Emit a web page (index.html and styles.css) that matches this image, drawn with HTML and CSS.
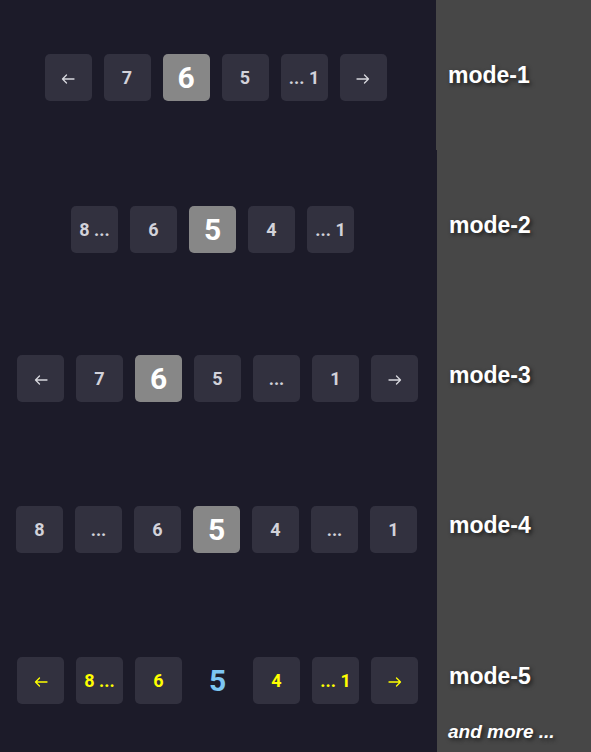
FILE: index.html
```html
<!DOCTYPE html>
<html>
<head>
<meta charset="utf-8">
<link rel="stylesheet" href="styles.css">
</head>
<body>
<main class="demo">
  <section class="row row-1">
    <div class="pager-area">
      <nav class="pager">
        <span class="btn"><svg class="arrow" viewBox="0 0 14 10" width="14" height="10"><path d="M13 5H1.5M5.5 1 1.5 5l4 4"/></svg></span>
        <span class="btn">7</span>
        <span class="btn active">6</span>
        <span class="btn">5</span>
        <span class="btn">... 1</span>
        <span class="btn"><svg class="arrow" viewBox="0 0 14 10" width="14" height="10"><path d="M1 5h11.5M8.5 1l4 4-4 4"/></svg></span>
      </nav>
    </div>
    <div class="label-area"><span class="label">mode-1</span></div>
  </section>

  <section class="row row-2">
    <div class="pager-area">
      <nav class="pager">
        <span class="btn">8 ...</span>
        <span class="btn">6</span>
        <span class="btn active">5</span>
        <span class="btn">4</span>
        <span class="btn">... 1</span>
      </nav>
    </div>
    <div class="label-area"><span class="label">mode-2</span></div>
  </section>

  <section class="row row-3">
    <div class="pager-area">
      <nav class="pager">
        <span class="btn"><svg class="arrow" viewBox="0 0 14 10" width="14" height="10"><path d="M13 5H1.5M5.5 1 1.5 5l4 4"/></svg></span>
        <span class="btn">7</span>
        <span class="btn active">6</span>
        <span class="btn">5</span>
        <span class="btn">...</span>
        <span class="btn">1</span>
        <span class="btn"><svg class="arrow" viewBox="0 0 14 10" width="14" height="10"><path d="M1 5h11.5M8.5 1l4 4-4 4"/></svg></span>
      </nav>
    </div>
    <div class="label-area"><span class="label">mode-3</span></div>
  </section>

  <section class="row row-4">
    <div class="pager-area">
      <nav class="pager">
        <span class="btn">8</span>
        <span class="btn">...</span>
        <span class="btn">6</span>
        <span class="btn active">5</span>
        <span class="btn">4</span>
        <span class="btn">...</span>
        <span class="btn">1</span>
      </nav>
    </div>
    <div class="label-area"><span class="label">mode-4</span></div>
  </section>

  <section class="row row-5">
    <div class="pager-area">
      <nav class="pager pager-yellow">
        <span class="btn"><svg class="arrow" viewBox="0 0 14 10" width="14" height="10"><path d="M13 5H1.5M5.5 1 1.5 5l4 4"/></svg></span>
        <span class="btn">8 ...</span>
        <span class="btn">6</span>
        <span class="btn active">5</span>
        <span class="btn">4</span>
        <span class="btn">... 1</span>
        <span class="btn"><svg class="arrow" viewBox="0 0 14 10" width="14" height="10"><path d="M1 5h11.5M8.5 1l4 4-4 4"/></svg></span>
      </nav>
    </div>
    <div class="label-area label-area-last">
      <span class="spacer"></span>
      <span class="label">mode-5</span>
      <span class="more">and more ...</span>
    </div>
  </section>
</main>
</body>
</html>
```

FILE: styles.css
```css
html, body {
  margin: 0;
  padding: 0;
}

body {
  width: 591px;
  height: 752px;
  overflow: hidden;
  background: #474747;
}

.demo {
  display: flex;
  flex-direction: column;
  height: 752px;
}

.row {
  display: grid;
  grid-template-columns: 437px 1fr;
  height: 150px;
}

.row-5 {
  height: 152px;
}

.row-1 {
  grid-template-columns: 436px 1fr;
}

.pager-area {
  background: #1c1b29;
  display: flex;
  justify-content: center;
  align-items: flex-start;
  padding-top: 55px;
}

.row-1 .pager-area { padding-top: 54px; padding-right: 5px; }
.row-2 .pager-area { padding-top: 56px; padding-right: 12px; }
.row-3 .pager-area { padding-top: 55px; padding-right: 2px; }
.row-4 .pager-area { padding-top: 56px; padding-right: 4px; }
.row-5 .pager-area { padding-top: 57px; padding-right: 2px; }

.pager {
  display: flex;
  gap: 12px;
}

.btn {
  width: 47px;
  height: 47px;
  border-radius: 5px;
  background: #32313f;
  color: #d2d2da;
  font-family: Roboto, "Liberation Sans", sans-serif;
  font-weight: 700;
  font-size: 18px;
  display: flex;
  align-items: center;
  justify-content: center;
  white-space: nowrap;
}

.btn.active {
  background: #878787;
  color: #ffffff;
  font-size: 30px;
}

.arrow {
  margin-top: 3px;
  fill: none;
  stroke: #d8d8de;
  stroke-width: 1.3;
  stroke-linecap: round;
  stroke-linejoin: round;
}

.pager-yellow .btn {
  color: #ffff00;
}

.pager-yellow .btn.active {
  background: transparent;
  color: #7dc6f2;
}

.pager-yellow .arrow {
  stroke: #ffff00;
}

.label-area {
  display: flex;
  align-items: center;
  padding-left: 12px;
}

.label {
  font-family: "Liberation Sans", Arial, sans-serif;
  font-weight: 700;
  font-size: 23px;
  color: #ffffff;
  text-shadow: 2px 2px 4px rgba(0, 0, 0, 0.6);
}

.label-area-last {
  display: grid;
  grid-template-rows: 1fr auto 1fr;
  align-items: center;
  padding-left: 11px;
}

.label-area-last .label {
  padding-left: 1px;
}

.more {
  align-self: end;
  padding-bottom: 9px;
  font-family: "Liberation Sans", Arial, sans-serif;
  font-weight: 700;
  font-style: italic;
  font-size: 19px;
  color: #ffffff;
  text-shadow: 2px 2px 4px rgba(0, 0, 0, 0.6);
}
```
